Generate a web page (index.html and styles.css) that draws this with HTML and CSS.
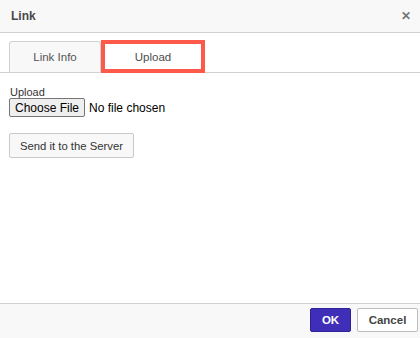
FILE: index.html
```html
<!DOCTYPE html>
<html lang="en">
<head>
    <meta charset="UTF-8">
    <meta name="viewport" content="width=device-width, initial-scale=1.0">
    <title>Link</title>
    <link rel="stylesheet" href="styles.css">
</head>
<body>

<div class="dialog">
    <div class="dialog-header">
        <span class="dialog-title">Link</span>
        <span class="dialog-close">&#x2715;</span>
    </div>

    <div class="dialog-body">
        <div class="tabs">
            <div class="tab">Link Info</div>
            <div class="tab active">Upload</div>
        </div>

        <div class="upload-panel">
            <label class="upload-label" for="upload-file">Upload</label>
            <input type="file" id="upload-file" class="file-input">
            <button class="send-btn" type="button">Send it to the Server</button>
        </div>
    </div>

    <div class="dialog-footer">
        <button class="btn btn-ok" type="button">OK</button>
        <button class="btn btn-cancel" type="button">Cancel</button>
    </div>
</div>

</body>
</html>
```

FILE: styles.css
```css
body {
    margin: 0;
    padding: 0;
    font-family: "Liberation Sans", Arial, sans-serif;
    background-color: #fff;
    color: #333;
}

.dialog {
    width: 420px;
    height: 338px;
    display: flex;
    flex-direction: column;
}

.dialog-header {
    height: 32px;
    background-color: #f8f8f8;
    border-bottom: 1px solid #d1d1d1;
    display: flex;
    align-items: center;
    justify-content: space-between;
    padding: 0 9px 0 11px;
}

.dialog-title {
    font-size: 12px;
    font-weight: bold;
    color: #484848;
}

.dialog-close {
    font-size: 12px;
    font-weight: bold;
    color: #777;
}

.dialog-body {
    flex: 1;
}

.tabs {
    display: flex;
    align-items: flex-end;
    padding: 7px 0 0 9px;
    border-bottom: 1px solid #d1d1d1;
}

.tab {
    width: 92px;
    height: 31px;
    box-sizing: border-box;
    background-color: #f8f8f8;
    border: 1px solid #d1d1d1;
    border-bottom: none;
    border-radius: 3px 3px 0 0;
    font-size: 11.5px;
    color: #555;
    display: flex;
    align-items: center;
    justify-content: center;
}

.tab.active {
    width: 104px;
    height: 33px;
    background-color: #fff;
    border: 4px solid #fe5a4c;
    margin-bottom: -1px;
    border-radius: 0;
    color: #4d4d4d;
}

.upload-panel {
    padding: 13px 10px 0 9px;
    display: flex;
    flex-direction: column;
    align-items: flex-start;
}

.upload-label {
    font-size: 11px;
    color: #333;
    line-height: 12px;
    margin-left: 1px;
}

.file-input {
    font-family: "Liberation Sans", Arial, sans-serif;
    font-size: 12px;
    color: #000;
    margin: 0;
}

.file-input::file-selector-button {
    font-family: "Liberation Sans", Arial, sans-serif;
    font-size: 12px;
    color: #000;
    background-color: #efefef;
    border: 1px solid #767676;
    border-radius: 2px;
    padding: 1px 5px;
    margin-right: 4px;
    height: 19px;
}

.send-btn {
    margin-top: 16px;
    height: 25px;
    padding: 0 10px;
    background-color: #f8f8f8;
    border: 1px solid #c9c9c9;
    border-radius: 2px;
    font-family: "Liberation Sans", Arial, sans-serif;
    font-size: 11.3px;
    color: #333;
}

.dialog-footer {
    height: 35px;
    box-sizing: border-box;
    background-color: #f8f8f8;
    border-top: 1px solid #d1d1d1;
    display: flex;
    justify-content: flex-end;
    gap: 6px;
    padding: 4px 2px 0 0;
}

.btn {
    height: 24px;
    border-radius: 2px;
    font-family: "Liberation Sans", Arial, sans-serif;
    font-size: 11.5px;
    font-weight: bold;
}

.btn-ok {
    width: 41px;
    background-color: #3f2fb8;
    border: 1px solid #2f2197;
    color: #fff;
}

.btn-cancel {
    width: 61px;
    background-color: #fff;
    border: 1px solid #bcbcbc;
    color: #444;
}
```
